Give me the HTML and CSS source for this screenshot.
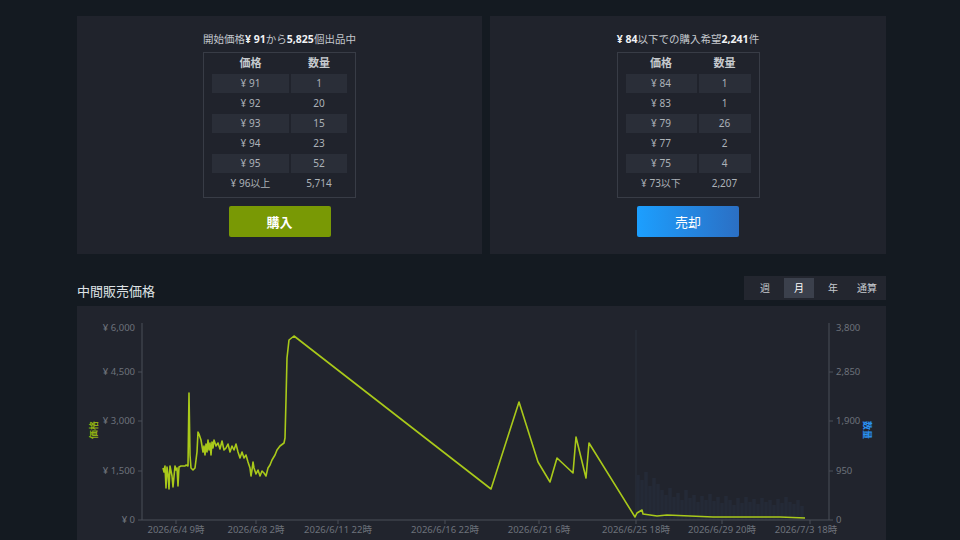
FILE: index.html
```html
<!doctype html>
<html lang="ja">
<head>
    <meta charset="UTF-8">
    <meta name="viewport" content="width=device-width, initial-scale=1.0">
    <title>マーケット</title>
    <link rel="stylesheet" href="styles.css">
</head>
<body>
    <div class="page">
        <div class="market">
            <div class="market-panel">
                <div class="market-title">開始価格<b>¥ 91</b>から<b>5,825</b>個出品中</div>
                <div class="orders orders-sell">
                    <div class="orders-head">価格</div>
                    <div class="orders-head">数量</div>
                    <div class="cell shade">¥ 91</div><div class="cell shade">1</div>
                    <div class="cell">¥ 92</div><div class="cell">20</div>
                    <div class="cell shade">¥ 93</div><div class="cell shade">15</div>
                    <div class="cell">¥ 94</div><div class="cell">23</div>
                    <div class="cell shade">¥ 95</div><div class="cell shade">52</div>
                    <div class="cell">¥ 96以上</div><div class="cell">5,714</div>
                </div>
                <button class="btn btn-buy">購入</button>
            </div>

            <div class="market-panel">
                <div class="market-title"><b>¥ 84</b>以下での購入希望<b>2,241</b>件</div>
                <div class="orders orders-buy">
                    <div class="orders-head">価格</div>
                    <div class="orders-head">数量</div>
                    <div class="cell shade">¥ 84</div><div class="cell shade">1</div>
                    <div class="cell">¥ 83</div><div class="cell">1</div>
                    <div class="cell shade">¥ 79</div><div class="cell shade">26</div>
                    <div class="cell">¥ 77</div><div class="cell">2</div>
                    <div class="cell shade">¥ 75</div><div class="cell shade">4</div>
                    <div class="cell">¥ 73以下</div><div class="cell">2,207</div>
                </div>
                <button class="btn btn-sell">売却</button>
            </div>
        </div>

        <div class="history">
            <div class="history-head">
                <h2>中間販売価格</h2>
                <div class="zoom-tabs">
                    <div class="zoom-tab">週</div>
                    <div class="zoom-tab active">月</div>
                    <div class="zoom-tab">年</div>
                    <div class="zoom-tab">通算</div>
                </div>
            </div>

            <div class="chart-panel">
                <svg class="chart" viewBox="77 306 809 240" width="809" height="240">
                    <!-- volume bars -->
                    <path class="hover-line" d="M636 330V520"/>
                    <path class="volume" d="M638 520V475M642 520V480M646 520V472M650 520V486M654 520V478M658 520V484M662 520V490M666 520V495M670 520V488M674 520V497M678 520V493M682 520V500M686 520V490M690 520V498M694 520V495M698 520V502M702 520V496M706 520V500M710 520V494M714 520V501M718 520V497M722 520V503M726 520V496M730 520V500M734 520V505M738 520V498M742 520V503M746 520V497M750 520V502M754 520V499M758 520V504M762 520V498M766 520V502M770 520V500M774 520V505M778 520V499M782 520V503M786 520V497M790 520V502M794 520V504M798 520V500M802 520V506"/>

                    <!-- axes -->
                    <path class="axis" d="M142 323V520H829V323"/>
                    <path class="axis" d="M138 372H142M138 421H142M138 471H142M138 520H142M829 372H833M829 421H833M829 471H833M829 520H833M176 520V524M256 520V524M338 520V524M445 520V524M539 520V524M636 520V524M722 520V524M810 520V524"/>

                    <g class="tick-left">
                        <text x="135" y="331">¥ 6,000</text>
                        <text x="135" y="375">¥ 4,500</text>
                        <text x="135" y="424">¥ 3,000</text>
                        <text x="135" y="474">¥ 1,500</text>
                        <text x="135" y="523">¥ 0</text>
                    </g>
                    <g class="tick-right">
                        <text x="836" y="331">3,800</text>
                        <text x="836" y="375">2,850</text>
                        <text x="836" y="424">1,900</text>
                        <text x="836" y="474">950</text>
                        <text x="836" y="523">0</text>
                    </g>
                    <g class="tick-bottom">
                        <text x="176" y="533">2026/6/4 9時</text>
                        <text x="256" y="533">2026/6/8 2時</text>
                        <text x="338" y="533">2026/6/11 22時</text>
                        <text x="445" y="533">2026/6/16 22時</text>
                        <text x="539" y="533">2026/6/21 6時</text>
                        <text x="636" y="533">2026/6/25 18時</text>
                        <text x="722" y="533">2026/6/29 20時</text>
                        <text x="806" y="533">2026/7/3 18時</text>
                    </g>
                    <text class="axis-title price-title" transform="translate(97 430) rotate(-90)">価格</text>
                    <text class="axis-title qty-title" transform="translate(864 430) rotate(90)">数量</text>

                    <!-- median price -->
                    <polyline class="price-line" points="163,468 164,472 165,466 166,488 167,467 168,474 169,489 170,466 172,476 173,487 175,466 176,470 177,468 178,486 179,467 181,466 185,466 186,465 188,466 189,393 190,455 191,468 193,470 195,468 197,452 198,432 199,434 201,440 203,452 204,446 205,455 206,444 207,452 208,440 209,450 210,443 211,455 212,442 213,448 214,440 216,446 218,443 220,449 222,441 224,450 226,448 228,444 230,452 232,446 234,450 236,444 238,452 240,458 242,452 244,458 246,455 248,462 250,468 251,476 252,470 253,462 254,468 256,474 258,470 260,476 262,471 264,473 266,476 268,468 270,465 272,460 275,455 277,450 280,446 284,443 285,438 286,400 287,358 289,340 294,336 491,489 519,402 538,462 550,482 557,458 573,473 576,437 586,478 589,443 635,517 637,513 642,510 643,514 657,516 667,515 713,517 760,517 780,517 805,518"/>
                </svg>
            </div>
        </div>
    </div>
</body>
</html>
```

FILE: styles.css
```css
* {
    margin: 0;
    padding: 0;
    box-sizing: border-box;
    font-family: "Noto Sans", "Noto Sans CJK JP", sans-serif;
}

body {
    background-color: #141a21;
    color: #acb2b8;
    overflow: hidden;
}

.page {
    width: 809px;
    margin-left: 77px;
    padding-top: 16px;
}

.market {
    display: grid;
    grid-template-columns: 405px 396px;
    column-gap: 8px;
}

.market-panel {
    background: #20232c;
    display: flex;
    flex-direction: column;
    align-items: center;
    padding: 14px 0 17px;
}

.market-title {
    font-size: 10.5px;
    line-height: 18px;
    color: #c3c7cc;
}

.market-title b {
    color: #f0f2f4;
    font-weight: 700;
}

.orders {
    display: grid;
    row-gap: 1px;
    column-gap: 2px;
    margin-top: 4px;
    padding: 0 8px 4px;
    border: 1px solid #383c46;
}

.orders-sell {
    grid-template-columns: 77px 56px;
}

.orders-buy {
    grid-template-columns: 71px 52px;
}

.orders-head {
    height: 20px;
    line-height: 20px;
    text-align: center;
    font-size: 11px;
    font-weight: 700;
    color: #c6cacf;
}

.cell {
    height: 19px;
    line-height: 19px;
    text-align: center;
    font-size: 10px;
    color: #acb2b8;
}

.cell.shade {
    background: #2a2e38;
}

.btn {
    margin-top: 8px;
    width: 102px;
    height: 31px;
    border: none;
    border-radius: 2px;
    color: #fff;
    font-size: 13px;
    cursor: pointer;
}

.btn-buy {
    background: #799905;
    font-weight: 700;
}

.btn-sell {
    background: linear-gradient(90deg, #1c9fff 0%, #2b6fc4 100%);
}

.history {
    margin-top: 22px;
}

.history-head {
    display: flex;
    justify-content: space-between;
    align-items: flex-end;
}

.history-head h2 {
    font-size: 13px;
    font-weight: 400;
    color: #dfe3e6;
    line-height: 18px;
}

.zoom-tabs {
    display: flex;
    background: #23262f;
    padding: 2px 4px 2px 6px;
    gap: 4px;
}

.zoom-tab {
    width: 30px;
    height: 20px;
    line-height: 20px;
    text-align: center;
    font-size: 10px;
    color: #c6cacf;
}

.zoom-tab.active {
    background: #3b404c;
    color: #ffffff;
}

.chart-panel {
    margin-top: 6px;
    background: #21242d;
    height: 240px;
}

.chart {
    display: block;
}

.axis {
    fill: none;
    stroke: #4b4f59;
    stroke-width: 1;
}

.hover-line {
    stroke: #2a303c;
    stroke-width: 1;
}

.volume {
    stroke: #242a37;
    stroke-width: 3.5;
}

.chart text {
    font-size: 9.5px;
    fill: #6d727b;
}

.tick-left text {
    text-anchor: end;
}

.tick-bottom text {
    text-anchor: middle;
}

.chart .axis-title {
    text-anchor: middle;
    font-size: 9px;
    font-weight: 700;
}

.chart .price-title {
    fill: #8fae12;
}

.chart .qty-title {
    fill: #2a8ff0;
}

.price-line {
    fill: none;
    stroke: #a9c91a;
    stroke-width: 1.6;
    stroke-linejoin: round;
}
```
